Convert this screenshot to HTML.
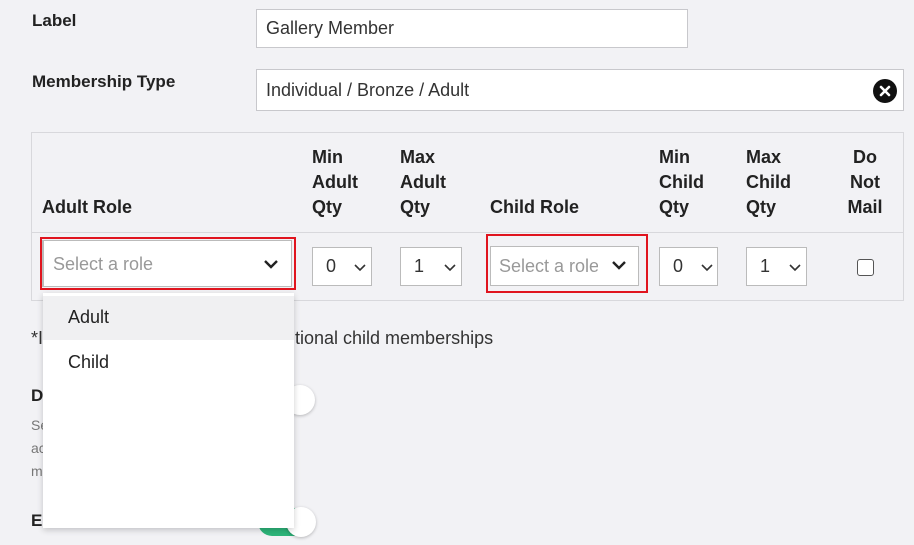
<!DOCTYPE html><html><head><style>
body{margin:0;width:914px;height:545px;background:#f2f2f5;font-family:"Liberation Sans",sans-serif;color:#222;position:relative;overflow:hidden}
.a{position:absolute}
.b{font-weight:bold;font-size:17px;color:#222}
.in{position:absolute;background:#fff;border:1px solid #c8c8cc;box-sizing:border-box;font-size:18px;color:#333}
.h{position:absolute;font-weight:bold;font-size:18px;line-height:25px;color:#222}
.sel{position:absolute;background:#fff;border:1px solid #bbb;box-sizing:border-box;font-size:18px;color:#333}
.red{position:absolute;border:2px solid #e0141e;box-sizing:border-box}
</style></head><body>
<div class="a b" style="left:32px;top:11px">Label</div>
<div class="in" style="left:256px;top:9px;width:432px;height:39px;padding:8px 0 0 9px">Gallery Member</div>
<div class="a b" style="left:32px;top:72px">Membership Type</div>
<div class="in" style="left:256px;top:69px;width:648px;height:42px;padding:10px 0 0 9px">Individual / Bronze / Adult</div>
<svg class="a" style="left:873px;top:79px" width="24" height="24"><circle cx="12" cy="12" r="12" fill="#111"/><path d="M8 8L16 16M16 8L8 16" stroke="#fff" stroke-width="2.6" stroke-linecap="round"/></svg>
<div class="a" style="left:31px;top:132px;width:873px;height:169px;border:1px solid #d8d8dc;box-sizing:border-box"></div>
<div class="a" style="left:32px;top:232px;width:871px;height:1px;background:#d8d8dc"></div>
<div class="h" style="left:42px;top:195px">Adult Role</div>
<div class="h" style="left:312px;top:145px">Min<br>Adult<br>Qty</div>
<div class="h" style="left:400px;top:145px">Max<br>Adult<br>Qty</div>
<div class="h" style="left:490px;top:195px">Child Role</div>
<div class="h" style="left:659px;top:145px">Min<br>Child<br>Qty</div>
<div class="h" style="left:746px;top:145px">Max<br>Child<br>Qty</div>
<div class="h" style="left:843px;top:145px;width:44px;text-align:center">Do<br>Not<br>Mail</div>
<div class="red" style="left:40px;top:237px;width:256px;height:53px"></div>
<div class="sel" style="left:42px;top:240px;width:250px;height:47px;padding:13px 0 0 9px;color:#999;border-left:2px solid #bbb">Select a role</div>
<svg class="a" style="left:263px;top:258px" width="16" height="12"><path d="M2 3L8 9L14 3" stroke="#222" stroke-width="2.4" fill="none"/></svg>
<div class="sel" style="left:312px;top:247px;width:60px;height:39px;padding:8px 0 0 13px">0</div>
<svg class="a" style="left:354px;top:263px" width="12" height="9"><path d="M1 2L6 7L11 2" stroke="#333" stroke-width="1.6" fill="none"/></svg>
<div class="sel" style="left:400px;top:247px;width:62px;height:39px;padding:8px 0 0 13px">1</div>
<svg class="a" style="left:444px;top:263px" width="12" height="9"><path d="M1 2L6 7L11 2" stroke="#333" stroke-width="1.6" fill="none"/></svg>
<div class="red" style="left:486px;top:234px;width:162px;height:59px"></div>
<div class="sel" style="left:490px;top:246px;width:149px;height:40px;padding:9px 0 0 8px;color:#999;overflow:hidden;white-space:nowrap">Select a role</div>
<div class="a" style="left:598px;top:247px;width:40px;height:38px;background:#fff"></div>
<svg class="a" style="left:611px;top:259px" width="16" height="12"><path d="M2 3L8 9L14 3" stroke="#222" stroke-width="2.4" fill="none"/></svg>
<div class="sel" style="left:659px;top:247px;width:59px;height:39px;padding:8px 0 0 13px">0</div>
<svg class="a" style="left:701px;top:263px" width="12" height="9"><path d="M1 2L6 7L11 2" stroke="#333" stroke-width="1.6" fill="none"/></svg>
<div class="sel" style="left:746px;top:247px;width:61px;height:39px;padding:8px 0 0 13px">1</div>
<svg class="a" style="left:789px;top:263px" width="12" height="9"><path d="M1 2L6 7L11 2" stroke="#333" stroke-width="1.6" fill="none"/></svg>
<div class="a" style="left:857px;top:259px;width:15px;height:15px;border:1px solid #555;border-radius:3px;background:#fff"></div>
<div class="a" style="left:31px;top:328px;font-size:18px;color:#333">*I</div>
<div class="a" style="left:295px;top:328px;font-size:18px;color:#333">tional child memberships</div>
<div class="a b" style="left:31px;top:386px">D</div>
<div class="a" style="left:31px;top:414px;font-size:14px;color:#777;line-height:23px">Se<br>ac<br>m</div>
<div class="a" style="left:285px;top:385px;width:30px;height:30px;border-radius:50%;background:#fff;box-shadow:0 1px 3px rgba(0,0,0,.25)"></div>
<div class="a b" style="left:31px;top:511px">E</div>
<div class="a" style="left:258px;top:508px;width:50px;height:28px;border-radius:14px;background:#2db57a"></div>
<div class="a" style="left:286px;top:507px;width:30px;height:30px;border-radius:50%;background:#fff;box-shadow:0 1px 3px rgba(0,0,0,.25)"></div>
<div class="a" style="left:43px;top:293px;width:251px;height:235px;background:#fff;box-shadow:0 2px 6px rgba(0,0,0,.2)"></div>
<div class="a" style="left:43px;top:296px;width:251px;height:44px;background:#f0f0f2"></div>
<div class="a" style="left:68px;top:307px;font-size:18px;color:#222">Adult</div>
<div class="a" style="left:68px;top:352px;font-size:18px;color:#222">Child</div>
</body></html>
